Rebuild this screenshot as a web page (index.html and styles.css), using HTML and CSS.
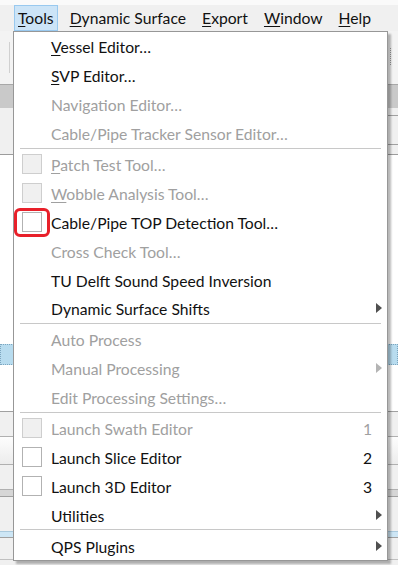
FILE: index.html
```html
<!DOCTYPE html>
<html lang="en">
<head>
    <meta charset="UTF-8">
    <meta name="viewport" content="width=device-width, initial-scale=1.0">
    <title>Tools menu</title>
    <link rel="stylesheet" href="styles.css">
</head>
<body>
    <div class="menubar">
        <div class="bar-item active"><u>T</u>ools</div>
        <div class="bar-item"><u>D</u>ynamic Surface</div>
        <div class="bar-item"><u>E</u>xport</div>
        <div class="bar-item"><u>W</u>indow</div>
        <div class="bar-item"><u>H</u>elp</div>
    </div>

    <!-- application behind the popup, only the edges show -->
    <div class="workspace">
        <div class="toolbar">
            <span class="grip-left"></span>
            <span class="grip-right"></span>
        </div>
        <div class="tabstrip"></div>
        <div class="panel-head">
            <span class="rule-a"></span>
            <span class="rule-b"></span>
        </div>
        <div class="tree">
            <div class="tree-selected"></div>
        </div>
        <div class="props">
            <div class="prop-row"></div>
            <div class="prop-row glossy"></div>
            <div class="prop-row"></div>
            <div class="prop-band"></div>
            <div class="prop-row tall"></div>
            <div class="prop-sel"></div>
            <div class="prop-row last"></div>
        </div>
    </div>

    <div class="popup">
        <div class="item"><span class="icon"></span><span class="label"><u>V</u>essel Editor…</span><span class="side"></span></div>
        <div class="item"><span class="icon"></span><span class="label"><u>S</u>VP Editor…</span><span class="side"></span></div>
        <div class="item off"><span class="icon"></span><span class="label">Navigation Editor…</span><span class="side"></span></div>
        <div class="item off"><span class="icon"></span><span class="label">Cable/Pipe Tracker Sensor Editor…</span><span class="side"></span></div>
        <div class="sep"></div>
        <div class="item off"><span class="icon"><span class="check"></span></span><span class="label"><u>P</u>atch Test Tool…</span><span class="side"></span></div>
        <div class="item off"><span class="icon"><span class="check"></span></span><span class="label"><u>W</u>obble Analysis Tool…</span><span class="side"></span></div>
        <div class="item marked"><span class="icon"><span class="check"></span></span><span class="label">Cable/Pipe TOP Detection Tool…</span><span class="side"></span><span class="redbox"></span></div>
        <div class="item off"><span class="icon"></span><span class="label">Cross Check Tool…</span><span class="side"></span></div>
        <div class="item"><span class="icon"></span><span class="label">TU Delft Sound Speed Inversion</span><span class="side"></span></div>
        <div class="item"><span class="icon"></span><span class="label">Dynamic Surface Shifts</span><span class="side"><span class="arrow"></span></span></div>
        <div class="sep"></div>
        <div class="item off"><span class="icon"></span><span class="label">Auto Process</span><span class="side"></span></div>
        <div class="item off"><span class="icon"></span><span class="label">Manual Processing</span><span class="side"><span class="arrow"></span></span></div>
        <div class="item off"><span class="icon"></span><span class="label">Edit Processing Settings…</span><span class="side"></span></div>
        <div class="sep"></div>
        <div class="item off"><span class="icon"><span class="check"></span></span><span class="label">Launch Swath Editor</span><span class="side"><span class="key">1</span></span></div>
        <div class="item"><span class="icon"><span class="check"></span></span><span class="label">Launch Slice Editor</span><span class="side"><span class="key">2</span></span></div>
        <div class="item"><span class="icon"><span class="check"></span></span><span class="label">Launch 3D Editor</span><span class="side"><span class="key">3</span></span></div>
        <div class="item"><span class="icon"></span><span class="label">Utilities</span><span class="side"><span class="arrow"></span></span></div>
        <div class="sep"></div>
        <div class="item"><span class="icon"></span><span class="label">QPS Plugins</span><span class="side"><span class="arrow"></span></span></div>
    </div>
</body>
</html>
```

FILE: styles.css
```css
body {
    margin: 0;
    font-family: Lato, "Open Sans", sans-serif;
    font-size: 15.7px;
    color: #111;
    background-color: #f0f0f0;
    overflow: hidden;
}

u {
    text-decoration-thickness: 1px;
    text-underline-offset: 2px;
}

/* menu bar */

.menubar {
    height: 31px;
    display: flex;
    align-items: flex-end;
    gap: 8px;
    padding-left: 14px;
    box-sizing: border-box;
    background: linear-gradient(#fafafa 0, #fafafa 5px, #f0f0f0 5px);
}

.bar-item {
    height: 26px;
    line-height: 25px;
    padding: 0 3px;
    box-sizing: border-box;
    border: 1px solid transparent;
    white-space: nowrap;
}

.bar-item.active {
    background-color: #cce4f7;
    border-color: #99c9ef;
}

/* background application */

.workspace {
    height: 534px;
    background-color: #f0f0f0;
}

.toolbar {
    height: 53px;
    position: relative;
    background-color: #f3f3f3;
    border-bottom: 1px solid #a8a8a8;
}

.grip-left {
    position: absolute;
    left: 9px;
    top: 11px;
    width: 1px;
    height: 31px;
    background-color: #d0d0d0;
}

.grip-right {
    position: absolute;
    left: 390px;
    top: 17px;
    width: 1px;
    height: 17px;
    border-left: 1px dotted #9a9a9a;
}

.tabstrip {
    height: 23px;
    background-color: #c9c9c9;
}

.panel-head {
    height: 46px;
    position: relative;
    background-color: #f0f0f0;
    border-bottom: 1px solid #9c9c9c;
}

.rule-a,
.rule-b {
    position: absolute;
    right: 0;
    width: 10px;
    height: 1px;
    background-color: #a0a0a0;
}

.rule-a { top: 7px; }
.rule-b { top: 36px; }

.tree {
    height: 257px;
    padding-top: 189px;
    box-sizing: border-box;
    background-color: #fff;
    border-bottom: 1px solid #a0a0a0;
}

.tree-selected {
    height: 21px;
    box-sizing: border-box;
    background-color: #b8dcef;
    border: 1px dotted #7da6bf;
}

.prop-row {
    height: 24px;
    background-color: #f0f0f0;
    border-bottom: 1px solid #b0b0b0;
}

.prop-row.glossy {
    height: 27px;
    background: linear-gradient(#fdfdfd, #ececec);
}

.prop-row.tall {
    height: 34px;
    border-bottom: none;
}

.prop-band {
    height: 6px;
    background-color: #d6d6d6;
    border-bottom: 1px solid #a0a0a0;
}

.prop-sel {
    height: 5px;
    background-color: #cde6f5;
    border-top: 1px solid #a9c9dd;
    border-bottom: 1px solid #a0a0a0;
}

.prop-row.last {
    height: 21px;
    border-bottom: 1px solid #c0c0c0;
}

/* popup menu */

.popup {
    position: absolute;
    left: 13px;
    top: 31px;
    width: 375px;
    box-sizing: border-box;
    background-color: #fff;
    border: 1px solid #979797;
    box-shadow: 3px 3px 2px rgba(0, 0, 0, 0.28);
}

.item {
    height: 28.9px;
    display: flex;
    align-items: center;
    position: relative;
}

.item.off {
    color: #a0a0a0;
}

.label {
    flex: 1;
    white-space: nowrap;
    padding-top: 2px;
}

.icon {
    width: 37px;
    flex: none;
    display: flex;
    padding-left: 8px;
    box-sizing: border-box;
}

.check {
    width: 20px;
    height: 20px;
    box-sizing: border-box;
    background-color: #fff;
    border: 1px solid #b2b2b2;
}

.item.off .check {
    background-color: #f0f0f0;
    border-color: #cecece;
}

.side {
    width: 40px;
    flex: none;
    display: flex;
    justify-content: flex-end;
    align-items: center;
}

.key {
    margin-right: 15px;
    padding-top: 2px;
}

.arrow {
    width: 0;
    height: 0;
    margin-right: 5px;
    border-left: 6px solid #505050;
    border-top: 5.5px solid transparent;
    border-bottom: 5.5px solid transparent;
}

.item.off .arrow {
    border-left-color: #b4b4b4;
}

.sep {
    height: 2px;
    margin: 0 6px;
    box-sizing: border-box;
    border-top: 1px solid #c8c8c8;
}

/* red annotation drawn over the checkbox */
.redbox {
    position: absolute;
    left: 0;
    top: 1px;
    width: 36px;
    height: 29px;
    box-sizing: border-box;
    border: 3px solid #e8202a;
    border-radius: 6px;
}
```
